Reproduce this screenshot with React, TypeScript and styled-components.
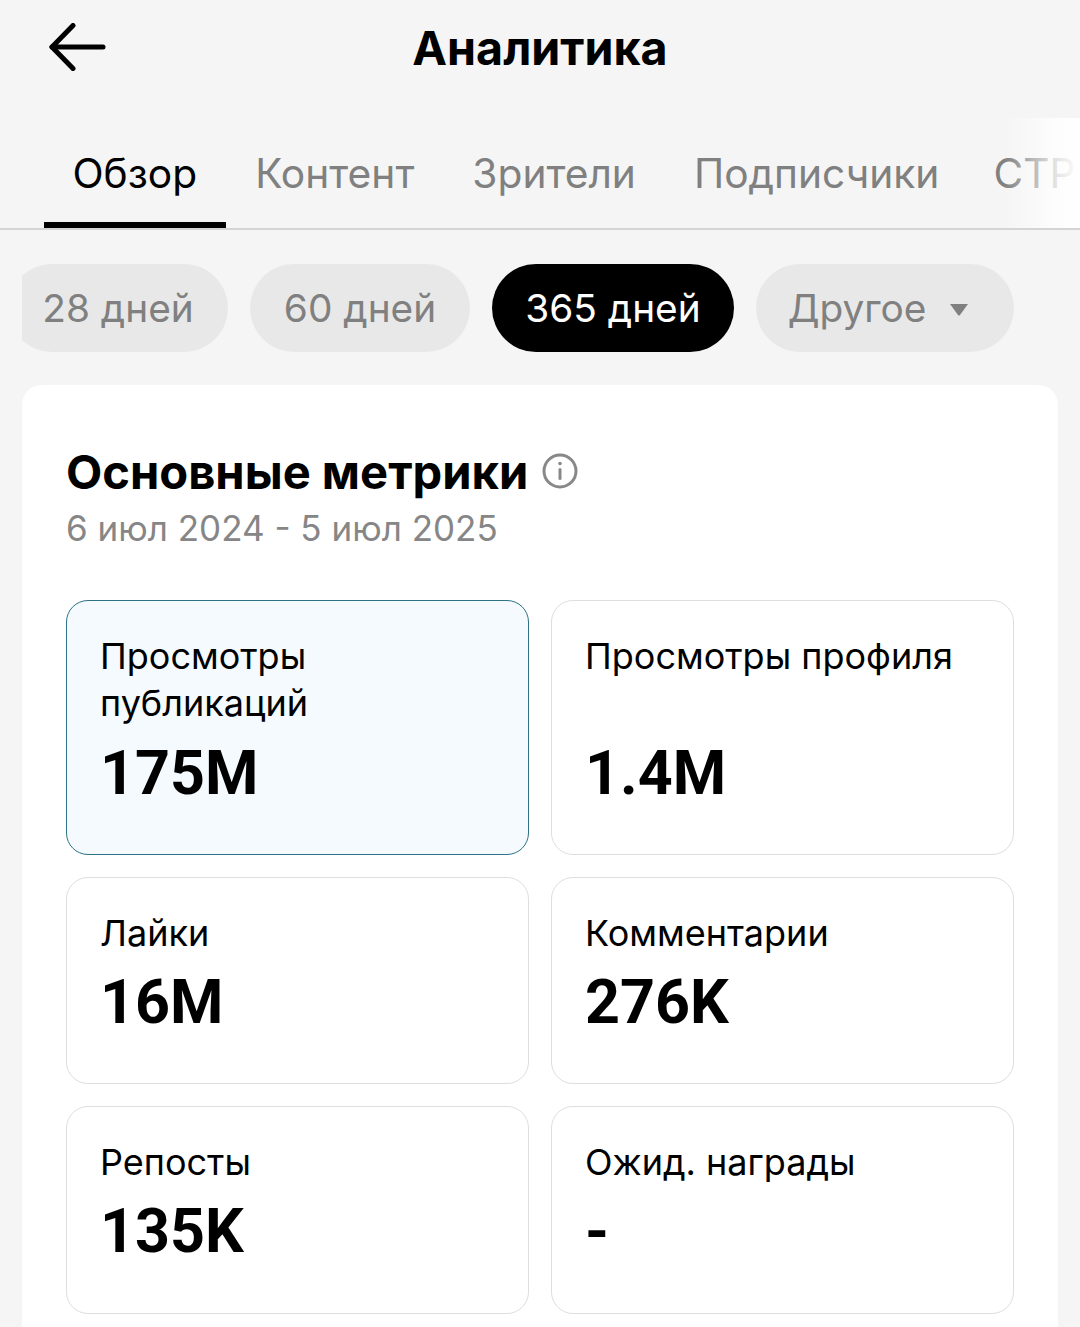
import React from "react";
import styled, { createGlobalStyle } from "styled-components";

const Global = createGlobalStyle`
  html, body { margin: 0; padding: 0; background: #f5f5f5; }
  body { font-family: Inter, "Liberation Sans", Arial, sans-serif; }
  * { box-sizing: border-box; }
`;

const Page = styled.div`
  width: 1080px;
  height: 1327px;
  overflow: hidden;
  background: #f5f5f5;
`;

const Header = styled.header`
  position: relative;
  height: 118px;
  display: flex;
  justify-content: center;
  padding-top: 21px;
`;

const BackButton = styled.button`
  position: absolute;
  left: 49px;
  top: 23px;
  width: 58px;
  height: 48px;
  padding: 0;
  border: 0;
  background: none;
  display: flex;
`;

const Title = styled.h1`
  margin: 0;
  font-size: 46.6px;
  line-height: 54px;
  font-weight: 700;
  color: #000;
`;

const TabBar = styled.nav`
  position: relative;
  height: 112px;
  display: flex;
  padding-left: 44px;
  border-bottom: 2px solid #d4d4d4;
  overflow: hidden;
`;

const Tab = styled.div<{ $active?: boolean; $last?: boolean }>`
  flex: none;
  height: 110px;
  margin-left: ${(p) => (p.$last ? "-4px" : "0")};
  padding: 32px 29px 0 ${(p) => (p.$active ? "28.5px" : "29px")};
  font-size: 40.7px;
  line-height: 48px;
  color: ${(p) => (p.$active ? "#000" : "#808080")};
  border-bottom: 6px solid ${(p) => (p.$active ? "#000" : "transparent")};
`;

const TabFade = styled.div`
  position: absolute;
  right: 0;
  top: 0;
  bottom: 0;
  width: 76px;
  background: linear-gradient(to right, rgba(255, 255, 255, 0), rgba(255, 255, 255, 0.75) 65%, #fff 100%);
`;

const ChipRow = styled.div`
  margin: 34px 22px 0;
  display: flex;
  gap: 22px;
  overflow: hidden;
`;

const Chip = styled.div<{ $active?: boolean; $width: number; $clipped?: boolean }>`
  flex: none;
  width: ${(p) => p.$width}px;
  height: 88px;
  margin-left: ${(p) => (p.$clipped ? "-14px" : "0")};
  padding-bottom: 2px;
  border-radius: 44px;
  display: flex;
  align-items: center;
  justify-content: center;
  gap: 23px;
  font-size: 38.8px;
  background: ${(p) => (p.$active ? "#000" : "#e8e8e8")};
  color: ${(p) => (p.$active ? "#fff" : "#808080")};
`;

const ChipCaret = styled.svg`
  flex: none;
  margin-top: 5px;
  margin-right: 13px;
`;

const Panel = styled.section`
  margin: 33px 22px 0;
  padding: 60px 44px 0;
  height: 960px;
  background: #fff;
  border-radius: 20px;
`;

const PanelTitleRow = styled.div`
  display: flex;
  align-items: center;
  gap: 14px;
  height: 54px;
`;

const PanelTitle = styled.h2`
  margin: 0;
  font-size: 47.1px;
  line-height: 54px;
  font-weight: 700;
  color: #000;
`;

const InfoIcon = styled.svg`
  flex: none;
  margin-top: -2px;
`;

const DateRange = styled.div`
  margin-top: 4px;
  font-size: 35px;
  line-height: 50px;
  color: #868686;
`;

const MetricGrid = styled.div`
  margin-top: 47px;
  display: grid;
  grid-template-columns: 463px 463px;
  grid-template-rows: 255px 207px 208px;
  gap: 22px;
`;

const MetricCard = styled.div<{ $selected?: boolean }>`
  padding: 32px 33px 0;
  border-radius: 22px;
  border: 1.5px solid ${(p) => (p.$selected ? "#2d7286" : "#dedede")};
  background: ${(p) => (p.$selected ? "#f4fafe" : "#fff")};
`;

const MetricLabel = styled.div`
  font-size: 36px;
  line-height: 47px;
  color: #000;
`;

const MetricValue = styled.div<{ $tall?: boolean }>`
  margin-top: ${(p) => (p.$tall ? "10px" : "9px")};
  font-family: Roboto, "Liberation Sans", sans-serif;
  font-size: 61px;
  line-height: 72px;
  font-weight: 700;
  color: #000;
`;

const metrics = [
  { label: "Просмотры публикаций", value: "175M", selected: true, tall: true },
  { label: "Просмотры профиля", value: "1.4M", tall: true },
  { label: "Лайки", value: "16M" },
  { label: "Комментарии", value: "276K" },
  { label: "Репосты", value: "135K" },
  { label: "Ожид. награды", value: "-" },
];

const LabelLines = styled.div<{ $twoLines?: boolean }>`
  min-height: ${(p) => (p.$twoLines ? "94px" : "47px")};
  max-width: 390px;
`;

export default function App() {
  return (
    <Page>
      <Global />
      <Header>
        <BackButton aria-label="Назад">
          <svg width="58" height="48" viewBox="0 0 58 48" fill="none" stroke="#000" strokeWidth="5" strokeLinecap="round" strokeLinejoin="round">
            <path d="M24 2.5 3 24l21 21.5" />
            <path d="M3 24h51" />
          </svg>
        </BackButton>
        <Title>Аналитика</Title>
      </Header>
      <TabBar>
        <Tab $active>Обзор</Tab>
        <Tab>Контент</Tab>
        <Tab>Зрители</Tab>
        <Tab>Подписчики</Tab>
        <Tab $last>СТР</Tab>
        <TabFade />
      </TabBar>
      <ChipRow>
        <Chip $width={220} $clipped>28 дней</Chip>
        <Chip $width={220}>60 дней</Chip>
        <Chip $width={242} $active>365 дней</Chip>
        <Chip $width={258}>
          Другое
          <ChipCaret width="20" height="14" viewBox="0 0 20 14" fill="#808080">
            <path d="M1 1h18l-8 11a1.3 1.3 0 0 1-2 0z" />
          </ChipCaret>
        </Chip>
      </ChipRow>
      <Panel>
        <PanelTitleRow>
          <PanelTitle>Основные метрики</PanelTitle>
          <InfoIcon width="36" height="36" viewBox="0 0 36 36" fill="none" stroke="#888" strokeWidth="3" strokeLinecap="round">
            <circle cx="18" cy="18" r="16" />
            <path d="M18 16.5v9" />
            <circle cx="18" cy="10.5" r="1.2" fill="#888" strokeWidth="1.2" />
          </InfoIcon>
        </PanelTitleRow>
        <DateRange>6 июл 2024 - 5 июл 2025</DateRange>
        <MetricGrid>
          {metrics.map((m) => (
            <MetricCard key={m.label} $selected={m.selected}>
              <MetricLabel>
                <LabelLines $twoLines={m.tall}>{m.label}</LabelLines>
              </MetricLabel>
              <MetricValue $tall={m.tall}>{m.value}</MetricValue>
            </MetricCard>
          ))}
        </MetricGrid>
      </Panel>
    </Page>
  );
}
